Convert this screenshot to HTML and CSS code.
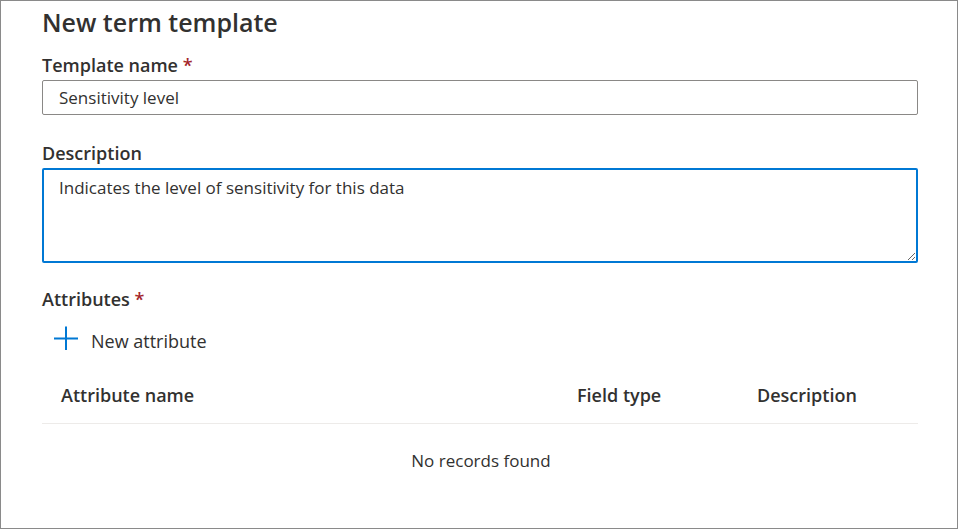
FILE: index.html
```html
<!DOCTYPE html>
<html lang="en">
<head>
<meta charset="utf-8">
<title>New term template</title>
<link rel="stylesheet" href="styles.css">
</head>
<body>
<div class="frame">
  <h1 class="title">New term template</h1>
  <div class="field">
    <label class="label" for="tname">Template name <span class="req">*</span></label>
    <input class="input" id="tname" type="text" value="Sensitivity level">
  </div>
  <div class="field field-desc">
    <label class="label" for="tdesc">Description</label>
    <textarea class="textarea" id="tdesc">Indicates the level of sensitivity for this data</textarea>
  </div>
  <div class="field field-attr">
    <div class="label">Attributes <span class="req">*</span></div>
    <button class="add-btn" type="button">
      <svg class="plus" width="24" height="24" viewBox="0 0 24 24" aria-hidden="true">
        <path d="M12 0.5V24M0 12.5H24" stroke="#0078d4" stroke-width="2" fill="none"/>
      </svg>
      <span class="add-text">New attribute</span>
    </button>
  </div>
  <div class="table">
    <div class="thead">
      <div class="th th-name">Attribute name</div>
      <div class="th th-type">Field type</div>
      <div class="th th-desc">Description</div>
    </div>
    <div class="empty">No records found</div>
  </div>
</div>
</body>
</html>
```
FILE: styles.css
```css
html, body {
  margin: 0;
  padding: 0;
  background: #ffffff;
}
body {
  font-family: "Open Sans", "Noto Sans", "Liberation Sans", sans-serif;
  color: #323130;
}
.frame {
  box-sizing: border-box;
  width: 958px;
  height: 529px;
  border: 1px solid #8a8a8a;
  padding: 0 39px 0 41px;
  overflow: hidden;
}
.title {
  margin: 0;
  padding-top: 4px;
  font-size: 25px;
  line-height: 34px;
  font-weight: 600;
  color: #323130;
}
.field {
  display: flex;
  flex-direction: column;
}
.label {
  font-size: 18px;
  line-height: 22px;
  font-weight: 600;
  color: #323130;
  margin-top: 15px;
  margin-bottom: 4px;
}
.req {
  color: #a4262c;
  font-weight: 600;
}
.input {
  box-sizing: border-box;
  width: 876px;
  height: 35px;
  margin: 0;
  border: 1px solid #8a8886;
  border-radius: 2px;
  padding: 0 16px;
  font-family: inherit;
  font-size: 17px;
  color: #323130;
  outline: none;
}
.field-desc .label {
  margin-top: 27px;
  margin-bottom: 4px;
}
.textarea {
  box-sizing: border-box;
  width: 876px;
  height: 95px;
  margin: 0;
  border: 2px solid #0078d4;
  border-radius: 2px;
  padding: 6px 15px;
  font-family: inherit;
  font-size: 17px;
  line-height: 24px;
  color: #323130;
  outline: none;
  resize: vertical;
}
.field-attr .label {
  margin-top: 25px;
  margin-bottom: 0;
}
.add-btn {
  display: flex;
  align-items: center;
  gap: 13px;
  align-self: flex-start;
  margin: 10px 0 0 12px;
  padding: 0;
  height: 36px;
  border: none;
  background: transparent;
  font-family: inherit;
  font-size: 18px;
  color: #323130;
  cursor: pointer;
}
.add-text {
  padding-top: 5px;
}
.plus {
  display: block;
}
.table {
  width: 876px;
  margin-top: 16px;
}
.thead {
  display: flex;
  box-sizing: border-box;
  height: 52px;
  padding-bottom: 6px;
  align-items: center;
  border-bottom: 1px solid #edebe9;
}
.th {
  font-size: 18px;
  font-weight: 600;
  color: #323130;
}
.th-name {
  width: 516px;
  padding-left: 19px;
}
.th-type {
  width: 180px;
}
.th-desc {
  flex: 1;
}
.empty {
  text-align: center;
  font-size: 17px;
  line-height: 24px;
  padding-top: 25px;
  padding-left: 2px;
  color: #323130;
}
```
